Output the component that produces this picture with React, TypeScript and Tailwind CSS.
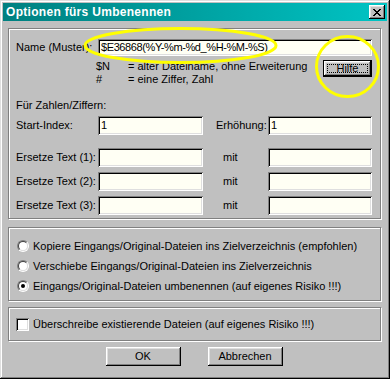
import React from "react";

const field =
  "bg-[#fffff4] shadow-[inset_1px_1px_0_#808080,inset_-1px_-1px_0_#ffffff,inset_2px_2px_0_#000000,inset_-2px_-2px_0_#dfdfdf]";
const raised =
  "bg-[#c0c0c0] shadow-[inset_-1px_-1px_0_#000000,inset_1px_1px_0_#ffffff,inset_-2px_-2px_0_#808080,inset_2px_2px_0_#dfdfdf]";
const group =
  "border border-[#808080] shadow-[1px_1px_0_#ffffff,inset_1px_1px_0_#ffffff]";

function Input({ value, className }: { value?: string; className: string }) {
  return (
    <div className={`${field} ${className} flex items-center pl-[3px] overflow-hidden whitespace-nowrap tracking-[-0.4px]`}>
      {value}
    </div>
  );
}

function Radio({ checked }: { checked?: boolean }) {
  return (
    <div className="w-[12px] h-[12px] rounded-full border border-t-[#808080] border-l-[#808080] border-b-white border-r-white flex items-center justify-center">
      <div className="w-[10px] h-[10px] rounded-full border border-t-[#404040] border-l-[#404040] border-b-[#dfdfdf] border-r-[#dfdfdf] bg-white flex items-center justify-center">
        {checked && <div className="w-[4px] h-[4px] rounded-full bg-black" />}
      </div>
    </div>
  );
}

export default function App() {
  return (
    <div
      className="relative w-[390px] h-[379px] bg-[#c0c0c0] p-[3px] text-black text-[11px] leading-[13px] shadow-[inset_-1px_-1px_0_#000000,inset_1px_1px_0_#dfdfdf,inset_-2px_-2px_0_#808080,inset_2px_2px_0_#ffffff]"
      style={{ fontFamily: '"Liberation Sans", Arial, sans-serif' }}
    >
      {/* Title bar */}
      <div className="h-[18px] flex items-center justify-between bg-gradient-to-r from-[#008080] to-[#00c4c4] pl-[3px] pr-[2px]">
        <span className="text-white font-bold text-[12px] tracking-[0.3px]">Optionen fürs Umbenennen</span>
        <div className={`${raised} w-[16px] h-[14px] flex items-center justify-center`}>
          <svg width="8" height="7" viewBox="0 0 8 7" shapeRendering="crispEdges">
            <path d="M0 0h2v1h-2zM6 0h2v1h-2zM1 1h2v1h-2zM5 1h2v1h-2zM2 2h4v1h-4zM3 3h2v1h-2zM2 4h4v1h-4zM1 5h2v1h-2zM5 5h2v1h-2zM0 6h2v1h-2zM6 6h2v1h-2z" fill="#000" />
          </svg>
        </div>
      </div>

      {/* Group 1 */}
      <div className={`${group} ml-[5px] mt-[7px] w-[373px] h-[191px] pl-[7px] pt-[10px]`}>
        <div className="flex items-center h-[17px]">
          <span className="w-[82px]">Name (Muster):</span>
          <Input value="$E36868(%Y-%m-%d_%H-%M-%S)" className="w-[274px] h-[17px]" />
        </div>
        <div className="flex mt-[4px]">
          <div className="w-[80px]" />
          <div className="flex flex-col">
            <div className="flex h-[13px]">
              <span className="w-[32px]">$N</span>
              <span>= alter Dateiname, ohne Erweiterung</span>
            </div>
            <div className="flex h-[13px]">
              <span className="w-[32px]">#</span>
              <span>= eine Ziffer, Zahl</span>
            </div>
          </div>
          <div className="ml-auto mr-[8px] w-[49px] h-[17px] border border-black">
            <div className={`${raised} w-full h-full p-[3px]`}>
              <div className="w-full h-full border border-dotted border-black flex items-center justify-center">
                Hilfe
              </div>
            </div>
          </div>
        </div>
        <div className="mt-[13px] h-[13px]">Für Zahlen/Ziffern:</div>
        <div className="flex items-center mt-[4px] h-[19px]">
          <span className="w-[82px]">Start-Index:</span>
          <Input value="1" className="w-[105px] h-[19px]" />
          <span className="ml-[13px] w-[52px]">Erhöhung:</span>
          <Input value="1" className="w-[104px] h-[19px]" />
        </div>
        {[1, 2, 3].map((n) => (
          <div key={n} className={`flex items-center h-[19px] ${n === 1 ? "mt-[13px]" : "mt-[5px]"}`}>
            <span className="w-[82px]">Ersetze Text ({n}):</span>
            <Input className="w-[105px] h-[19px]" />
            <span className="ml-[20px] w-[45px]">mit</span>
            <Input className="w-[104px] h-[19px]" />
          </div>
        ))}
      </div>

      {/* Group 2 */}
      <div className={`${group} ml-[5px] mt-[8px] w-[373px] h-[74px] pl-[8px] pt-[12px] flex flex-col gap-[8px]`}>
        {[
          "Kopiere Eingangs/Original-Dateien ins Zielverzeichnis (empfohlen)",
          "Verschiebe Eingangs/Original-Dateien ins Zielverzeichnis",
          "Eingangs/Original-Dateien umbenennen (auf eigenes Risiko !!!)",
        ].map((t, i) => (
          <div key={i} className="flex items-center h-[12px] gap-[4px]">
            <Radio checked={i === 2} />
            <span className="whitespace-nowrap">{t}</span>
          </div>
        ))}
      </div>

      {/* Group 3 */}
      <div className={`${group} ml-[5px] mt-[6px] w-[373px] h-[34px] pl-[7px] flex items-center`}>
        <div className={`${field} w-[13px] h-[13px] bg-white`} />
        <span className="ml-[4px] whitespace-nowrap">Überschreibe existierende Dateien (auf eigenes Risiko !!!)</span>
      </div>

      {/* Buttons */}
      <div className="flex justify-center gap-[27px] mt-[6px] pr-[2px]">
        <div className={`${raised} w-[75px] h-[19px] flex items-center justify-center`}>OK</div>
        <div className={`${raised} w-[75px] h-[19px] flex items-center justify-center`}>Abbrechen</div>
      </div>

      {/* Yellow annotations */}
      <svg className="absolute left-0 top-0 pointer-events-none" width="390" height="379">
        <ellipse cx="180.5" cy="45.5" rx="95.5" ry="17" fill="none" stroke="#ffff00" strokeWidth="3" />
        <ellipse cx="347.5" cy="66.5" rx="31" ry="30" fill="none" stroke="#ffff00" strokeWidth="3" />
      </svg>
    </div>
  );
}
